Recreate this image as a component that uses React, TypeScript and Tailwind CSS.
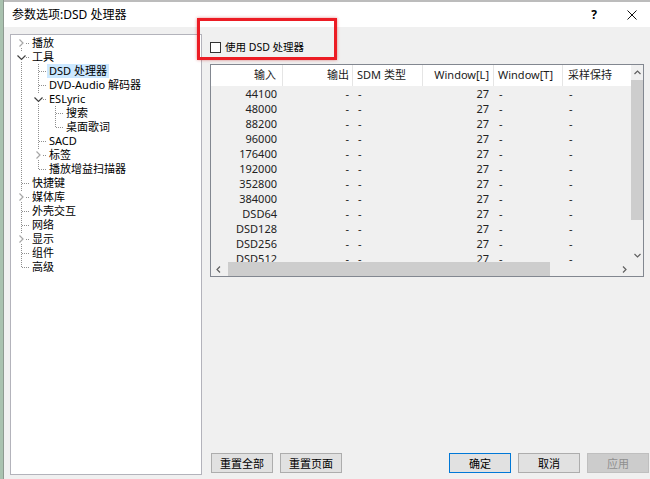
import React from 'react';

type TreeRow = {
  label: string;
  depth: number;
  anc: boolean[];
  last?: boolean;
  first?: boolean;
  exp?: 'open' | 'closed';
  sel?: boolean;
};

const treeRows: TreeRow[] = [
  { label: '播放', depth: 0, anc: [], first: true, exp: 'closed' },
  { label: '工具', depth: 0, anc: [], exp: 'open' },
  { label: 'DSD 处理器', depth: 1, anc: [true], sel: true },
  { label: 'DVD-Audio 解码器', depth: 1, anc: [true] },
  { label: 'ESLyric', depth: 1, anc: [true], exp: 'open' },
  { label: '搜索', depth: 2, anc: [true, true] },
  { label: '桌面歌词', depth: 2, anc: [true, true], last: true },
  { label: 'SACD', depth: 1, anc: [true] },
  { label: '标签', depth: 1, anc: [true], exp: 'closed' },
  { label: '播放增益扫描器', depth: 1, anc: [true], last: true },
  { label: '快捷键', depth: 0, anc: [] },
  { label: '媒体库', depth: 0, anc: [], exp: 'closed' },
  { label: '外壳交互', depth: 0, anc: [] },
  { label: '网络', depth: 0, anc: [] },
  { label: '显示', depth: 0, anc: [], exp: 'closed' },
  { label: '组件', depth: 0, anc: [] },
  { label: '高级', depth: 0, anc: [], last: true },
];

const LINE = '#8f8f8f';

function PassCell({ on }: { on: boolean }) {
  return (
    <svg width="17" height="14" className="shrink-0" shapeRendering="crispEdges">
      {on && <line x1="8.5" y1="0" x2="8.5" y2="14" stroke={LINE} strokeDasharray="1 1" />}
    </svg>
  );
}

function NodeCell({ row }: { row: TreeRow }) {
  if (row.exp) {
    return (
      <svg width="17" height="14" className="shrink-0">
        <g shapeRendering="crispEdges">
          {!row.first && <line x1="8.5" y1="0" x2="8.5" y2="2" stroke={LINE} strokeDasharray="1 1" />}
          {!row.last && <line x1="8.5" y1="12" x2="8.5" y2="14" stroke={LINE} strokeDasharray="1 1" />}
          <line x1="13" y1="7.5" x2="17" y2="7.5" stroke={LINE} strokeDasharray="1 1" />
        </g>
        {row.exp === 'closed' ? (
          <path d="M6.5 3.5 L10 7 L6.5 10.5" fill="none" stroke="#a6a6a6" strokeWidth="1.2" />
        ) : (
          <path d="M4.5 5.5 L8.5 9.5 L12.5 5.5" fill="none" stroke="#404040" strokeWidth="1.2" />
        )}
      </svg>
    );
  }
  return (
    <svg width="17" height="14" className="shrink-0" shapeRendering="crispEdges">
      <line x1="8.5" y1="0" x2="8.5" y2={row.last ? 7.5 : 14} stroke={LINE} strokeDasharray="1 1" />
      <line x1="9" y1="7.5" x2="17" y2="7.5" stroke={LINE} strokeDasharray="1 1" />
    </svg>
  );
}

const inputs = ['44100', '48000', '88200', '96000', '176400', '192000', '352800', '384000', 'DSD64', 'DSD128', 'DSD256', 'DSD512'];

function Btn({ label, primary, disabled }: { label: string; primary?: boolean; disabled?: boolean }) {
  const cls = disabled
    ? 'bg-[#cccccc] border-[#bfbfbf] text-[#8f8f8f]'
    : primary
    ? 'bg-[#e1e1e1] border-[#0078d7] text-[#000]'
    : 'bg-[#e1e1e1] border-[#adadad] text-[#000]';
  return (
    <div className={`w-[62px] h-[20px] border flex items-center justify-center text-[11px] leading-none ${cls}`}>
      {label}
    </div>
  );
}

export default function App() {
  return (
    <div className="w-[650px] h-[479px] relative overflow-hidden bg-[#f0f0f0] flex [font-family:'Noto_Sans','Noto_Sans_CJK_SC',sans-serif] text-[11px] text-[#000]">
      {/* background window strip */}
      <div className="w-[3px] h-full bg-[#a9c2af] border-r border-[#8d9a90] shrink-0 box-content" />
      <div className="flex-1 flex flex-col min-w-0">
        <div className="h-[2px] bg-[#bcbcbc] shrink-0" />
        {/* title bar */}
        <div className="h-[25px] bg-white flex items-center pl-[8px] pr-[13px] shrink-0">
          <span className="text-[12px] leading-none">参数选项:DSD 处理器</span>
          <div className="flex-1" />
          <span className="text-[12px] font-bold leading-none mr-[30px]">?</span>
          <svg width="10" height="10" viewBox="0 0 10 10">
            <path d="M0.5 0.5 L9.5 9.5 M9.5 0.5 L0.5 9.5" stroke="#111" strokeWidth="1" />
          </svg>
        </div>
        {/* body */}
        <div className="flex-1 flex min-h-0">
          {/* tree */}
          <div className="ml-[6px] mt-[7px] mb-[4px] w-[192px] bg-white border border-[#b3b3bb] pl-[2px] pt-[1px] shrink-0">
            {treeRows.map((r, i) => (
              <div key={i} className="flex h-[14px] items-center">
                {r.anc.map((a, j) => (
                  <PassCell key={j} on={a} />
                ))}
                <NodeCell row={r} />
                <span className={`h-[14px] leading-[14px] px-[2px] whitespace-nowrap ${r.sel ? 'bg-[#cce8ff]' : ''}`}>
                  {r.label}
                </span>
              </div>
            ))}
          </div>
          {/* right side */}
          <div className="flex-1 flex flex-col min-w-0">
            <div className="mt-[15px] ml-[8px] h-[11px] flex items-center">
              <div className="w-[11px] h-[11px] border border-[#333] bg-white shrink-0" />
              <span className="ml-[4px] leading-none text-[10.5px]">使用 DSD 处理器</span>
            </div>
            {/* table */}
            <div className="mt-[11px] ml-[8px] mr-[6px] h-[213px] border border-[#828790] flex flex-col">
              <div className="flex h-[197px]">
                <div className="w-[420px] flex flex-col overflow-hidden">
                  <div className="h-[21px] bg-white flex text-[#1a1a1a] shrink-0">
                    <div className="w-[72px] border-r border-[#e5e5e5] flex items-center justify-end pr-[6px]">输入</div>
                    <div className="w-[70px] border-r border-[#e5e5e5] flex items-center justify-end pr-[3px]">输出</div>
                    <div className="w-[70px] border-r border-[#e5e5e5] flex items-center pl-[4px]">SDM 类型</div>
                    <div className="w-[71px] border-r border-[#e5e5e5] flex items-center justify-end pr-[4px]">Window[L]</div>
                    <div className="w-[69px] border-r border-[#e5e5e5] flex items-center pl-[4px]">Window[T]</div>
                    <div className="w-[68px] flex items-center pl-[5px]">采样保持</div>
                  </div>
                  <div className="h-[176px] overflow-hidden bg-[#f0f0f0] text-[#222]">
                    {inputs.map((v) => (
                      <div key={v} className="flex h-[15px] items-center leading-none">
                        <div className="w-[72px] text-right pr-[6px]">{v}</div>
                        <div className="w-[70px] text-right pr-[4px]">-</div>
                        <div className="w-[70px] pl-[5px]">-</div>
                        <div className="w-[71px] text-right pr-[5px]">27</div>
                        <div className="w-[69px] pl-[5px]">-</div>
                        <div className="w-[68px] pl-[6px]">-</div>
                      </div>
                    ))}
                  </div>
                </div>
                {/* vertical scrollbar */}
                <div className="w-[12px] bg-[#f0f0f0] flex flex-col items-stretch">
                  <div className="h-[14px] flex items-center justify-center">
                    <svg width="7" height="5" viewBox="0 0 7 5">
                      <path d="M0.5 4 L3.5 1 L6.5 4" fill="none" stroke="#606060" strokeWidth="1.2" />
                    </svg>
                  </div>
                  <div className="h-[1px]" />
                  <div className="h-[140px] bg-[#cdcdcd]" />
                  <div className="flex-1" />
                  <div className="h-[14px] flex items-center justify-center">
                    <svg width="7" height="5" viewBox="0 0 7 5">
                      <path d="M0.5 1 L3.5 4 L6.5 1" fill="none" stroke="#606060" strokeWidth="1.2" />
                    </svg>
                  </div>
                </div>
              </div>
              {/* horizontal scrollbar */}
              <div className="flex h-[14px]">
                <div className="w-[420px] bg-[#f0f0f0] flex items-stretch">
                  <div className="w-[14px] flex items-center justify-center">
                    <svg width="5" height="7" viewBox="0 0 5 7">
                      <path d="M4 0.5 L1 3.5 L4 6.5" fill="none" stroke="#606060" strokeWidth="1.2" />
                    </svg>
                  </div>
                  <div className="w-[3px]" />
                  <div className="w-[322px] bg-[#cdcdcd]" />
                  <div className="flex-1" />
                  <div className="w-[14px] flex items-center justify-center">
                    <svg width="5" height="7" viewBox="0 0 5 7">
                      <path d="M1 0.5 L4 3.5 L1 6.5" fill="none" stroke="#606060" strokeWidth="1.2" />
                    </svg>
                  </div>
                </div>
                <div className="w-[12px] bg-[#f0f0f0]" />
              </div>
            </div>
            <div className="flex-1" />
            {/* buttons */}
            <div className="ml-[9px] mr-[1px] mb-[6px] flex items-center">
              <div className="flex gap-[7px]">
                <Btn label="重置全部" />
                <Btn label="重置页面" />
              </div>
              <div className="flex-1" />
              <div className="flex gap-[7px]">
                <Btn label="确定" primary />
                <Btn label="取消" />
                <Btn label="应用" disabled />
              </div>
            </div>
          </div>
        </div>
      </div>
      {/* red annotation box */}
      <div className="absolute left-[197px] top-[18px] w-[140px] h-[42px] border-[3px] border-[#ec1c24] shadow-[0_0_3px_rgba(200,0,0,0.45)] pointer-events-none" />
    </div>
  );
}
